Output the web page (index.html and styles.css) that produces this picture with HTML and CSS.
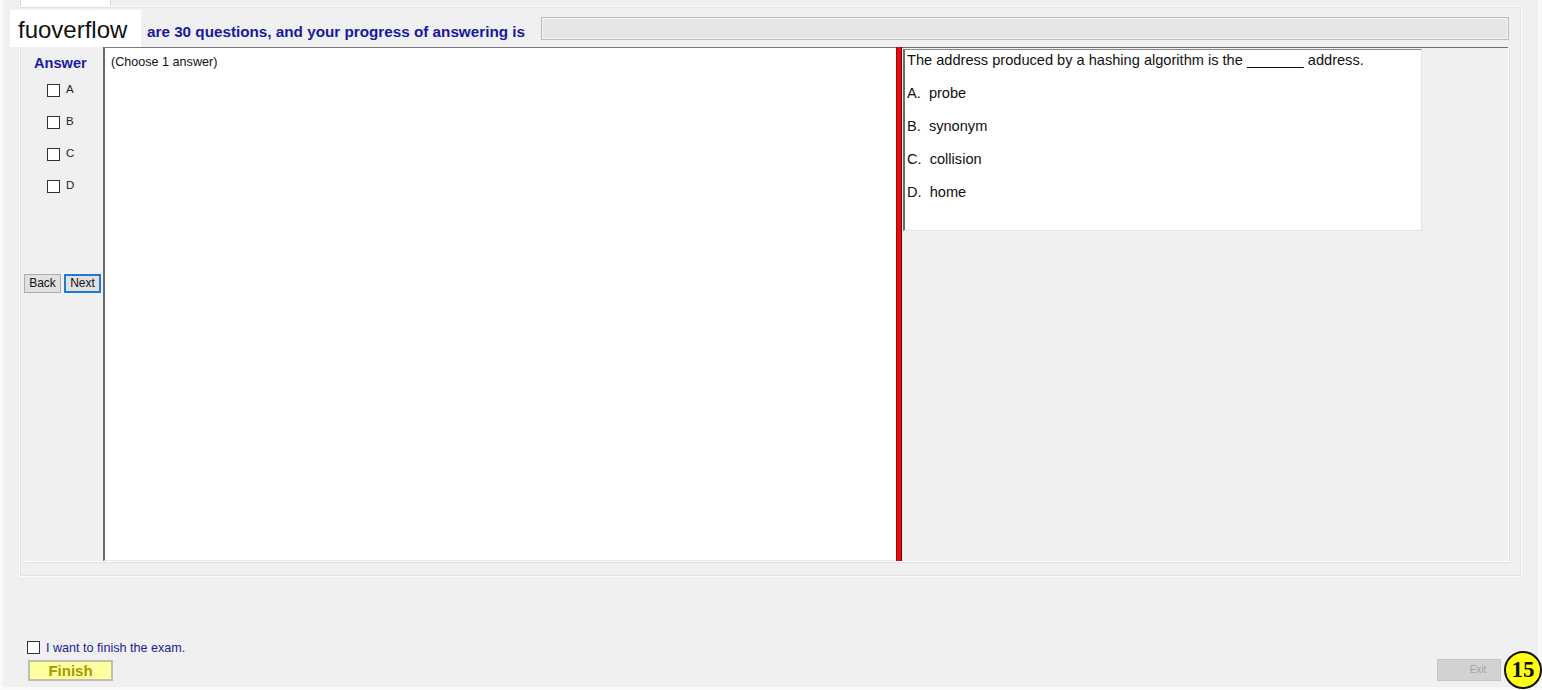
FILE: index.html
```html
<!DOCTYPE html>
<html lang="en">
<head>
<meta charset="utf-8">
<title>Exam</title>
<link rel="stylesheet" href="styles.css">
</head>
<body>
<div class="window">
  <div class="tabs"><div class="tab"></div></div>
  <div class="tabpage">
    <div class="header">
      <div class="header-text">are 30 questions, and your progress of answering is</div>
      <div class="progress"></div>
    </div>
    <div class="main">
      <div class="answer-col">
        <div class="answer-label">Answer</div>
        <div class="opts">
          <div class="opt"><span class="box"></span><span class="letter">A</span></div>
          <div class="opt"><span class="box"></span><span class="letter">B</span></div>
          <div class="opt"><span class="box"></span><span class="letter">C</span></div>
          <div class="opt"><span class="box"></span><span class="letter">D</span></div>
        </div>
        <div class="nav">
          <button class="btn">Back</button>
          <button class="btn btn-focus">Next</button>
        </div>
      </div>
      <div class="textarea">(Choose 1 answer)</div>
      <div class="splitter"></div>
      <div class="right">
        <div class="qbox">
          <p>The address produced by a hashing algorithm is the _______ address.</p>
          <p>A.&nbsp; probe</p>
          <p>B.&nbsp; synonym</p>
          <p>C.&nbsp; collision</p>
          <p>D.&nbsp; home</p>
        </div>
      </div>
    </div>
  </div>
  <div class="footer">
    <div class="finish-col">
      <div class="confirm"><span class="box"></span><span class="confirm-text">I want to finish the exam.</span></div>
      <button class="finish">Finish</button>
    </div>
    <button class="exit">Exit</button>
  </div>
  <div class="brand">fuoverflow</div>
  <div class="badge">15</div>
</div>
</body>
</html>
```

FILE: styles.css
```css
* { box-sizing: border-box; }
html, body { margin: 0; padding: 0; }
body {
  width: 1542px;
  height: 690px;
  overflow: hidden;
  background: #f9f9f9;
  font-family: "Liberation Sans", Arial, sans-serif;
}
.window {
  position: relative;
  margin-left: 3px;
  width: 1535px;
  height: 687px;
  background: #f0f0f0;
  display: flex;
  flex-direction: column;
}
.tabs {
  height: 6px;
  padding-left: 17px;
  display: flex;
}
.tab {
  width: 91px;
  height: 6px;
  background: #fff;
  border-left: 1px solid #dadada;
  border-right: 1px solid #dadada;
}
.tabpage {
  margin-left: 16px;
  width: 1503px;
  height: 571px;
  border: 1px solid #fcfcfc;
  box-shadow: inset 0 0 0 1px #e2e2e2;
  padding: 0 12px 0 4px;
  display: flex;
  flex-direction: column;
}
.header {
  height: 40px;
  display: flex;
  align-items: flex-start;
}
.header-text {
  margin-left: 123px;
  margin-top: 16px;
  font-size: 15.25px;
  font-weight: bold;
  line-height: 17px;
  color: #1818a0;
  white-space: nowrap;
}
.progress {
  margin-left: 16px;
  margin-top: 10px;
  flex: 1;
  height: 23px;
  background: #e6e6e6;
  border: 1px solid #bcbcbc;
  box-shadow: inset 0 0 0 1px #f4f4f4;
}
.main {
  height: 515px;
  display: flex;
  border-right: 1px solid #ffffff;
  border-bottom: 1px solid #ffffff;
  box-shadow: 1px 1px 0 #e0e0e0;
}
.answer-col {
  width: 79px;
  display: flex;
  flex-direction: column;
}
.answer-label {
  margin-top: 8px;
  padding-left: 10px;
  font-size: 14.6px;
  font-weight: bold;
  line-height: 17px;
  color: #1a1aa8;
}
.opts {
  margin-top: 12px;
  display: flex;
  flex-direction: column;
  gap: 19px;
}
.opt {
  display: flex;
  align-items: center;
  height: 13px;
  padding-left: 23px;
}
.box {
  display: inline-block;
  width: 13px;
  height: 13px;
  background: #fff;
  border: 1px solid #333;
}
.letter {
  margin-left: 6px;
  font-size: 11.5px;
  color: #222;
  line-height: 13px;
  position: relative;
  top: -1px;
}
.nav {
  margin-top: 81px;
  display: flex;
  gap: 3px;
}
.btn {
  width: 37px;
  height: 19px;
  padding: 0;
  margin: 0;
  font-family: "Liberation Sans", Arial, sans-serif;
  font-size: 12px;
  color: #111;
  background: #e1e1e1;
  border: 1px solid #adadad;
  line-height: 17px;
}
.btn-focus {
  border: 2px solid #1f7ad0;
  line-height: 15px;
}
.textarea {
  width: 793px;
  background: #fff;
  border-top: 1px solid #7a7a7a;
  border-left: 2px solid #6a6a6a;
  border-bottom: 1px solid #e8e8e8;
  padding: 6px 0 0 6px;
  font-size: 12.6px;
  line-height: 16px;
  color: #111;
}
.splitter {
  width: 6px;
  background: #e01010;
  border-left: 1px solid #b00000;
  border-right: 1px solid #7a0000;
}
.right {
  flex: 1;
  border-top: 1px solid #6e6e6e;
  padding: 1px 0 0 1px;
}
.qbox {
  width: 519px;
  height: 182px;
  background: #fff;
  border-top: 1px solid #8a8a8a;
  border-left: 2px solid #6e6e6e;
  border-right: 1px solid #e4e4e4;
  border-bottom: 1px solid #e4e4e4;
  padding: 2px 0 0 2px;
}
.qbox p {
  margin: 0 0 16px 0;
  font-size: 14.6px;
  line-height: 17px;
  color: #111;
  white-space: nowrap;
}
.footer {
  flex: 1;
  display: flex;
  justify-content: space-between;
  align-items: flex-end;
  padding: 0 37px 6px 24px;
}
.finish-col {
  display: flex;
  flex-direction: column;
}
.confirm {
  display: flex;
  align-items: center;
  height: 15px;
}
.confirm-text {
  margin-left: 6px;
  font-size: 12.6px;
  color: #20209a;
  line-height: 15px;
  position: relative;
  top: 1px;
}
.finish {
  margin-top: 5px;
  margin-left: 1px;
  width: 85px;
  height: 21px;
  padding: 0;
  background: #ffffa0;
  border: 2px solid #c0c0b0;
  font-family: "Liberation Sans", Arial, sans-serif;
  font-size: 15px;
  font-weight: bold;
  color: #9c9c00;
  line-height: 17px;
}
.exit {
  width: 64px;
  height: 22px;
  padding: 0 0 0 18px;
  background: #d2d2d2;
  border: 1px solid #c6c6c6;
  font-family: "Liberation Sans", Arial, sans-serif;
  font-size: 10px;
  color: #a4a4a4;
  line-height: 20px;
}
.brand {
  position: absolute;
  left: 7px;
  top: 10px;
  width: 131px;
  height: 37px;
  background: #fff;
  font-family: "Liberation Sans", Arial, sans-serif;
  font-size: 24px;
  line-height: 40px;
  color: #111;
  padding-left: 8px;
}
.badge {
  position: absolute;
  right: -4px;
  bottom: -2px;
  width: 38px;
  height: 38px;
  border-radius: 50%;
  background: #ffff10;
  border: 2px solid #111;
  font-family: "Liberation Serif", "Times New Roman", serif;
  font-weight: bold;
  font-size: 23px;
  line-height: 34px;
  text-align: center;
  color: #111;
}
```
